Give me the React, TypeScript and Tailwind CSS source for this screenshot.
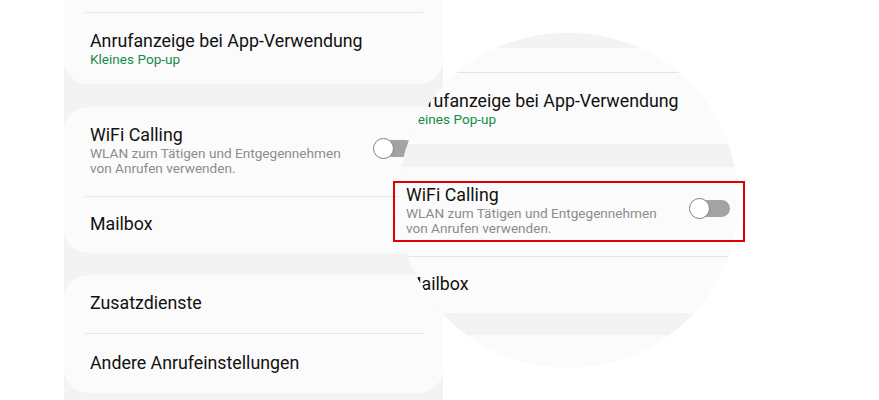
import React from "react";

function Divider() {
  return <div className="ml-[21px] mr-[20px] h-px bg-[#e5e5e5]" />;
}

function Toggle() {
  return (
    <div className="relative w-[41px] h-[21px] shrink-0 -mt-[4px]">
      <div className="absolute left-[10px] right-0 top-[2px] bottom-[2px] rounded-full bg-[#a3a3a3]" />
      <div className="absolute left-0 top-0 w-[21px] h-[21px] rounded-full bg-white border-[1.5px] border-[#808080]" />
    </div>
  );
}

function Row({ label, hidden }: { label: string; hidden?: boolean }) {
  return (
    <div className="h-[58.5px] px-[26px] flex items-center text-[17.8px] text-[#111]">
      {!hidden && label}
    </div>
  );
}

// the call settings list, used twice: once in place, once inside the magnifier
function Screen({ zoomed }: { zoomed?: boolean }) {
  return (
    <div className="w-[379px] bg-[#f3f3f3] flex flex-col gap-[23px] pb-[20px] [font-family:Roboto,'Noto_Sans',sans-serif]">
      <div className="bg-[#fbfbfb] rounded-b-[24px]">
        <div className="h-[24px]" />
        <Divider />
        <div className="px-[26px] pt-[17px] pb-[16px]">
          <div className="text-[17.8px] leading-[22px] text-[#111]">Anrufanzeige bei App-Verwendung</div>
          <div className="text-[13.6px] leading-[15.5px] text-[#168b49]">Kleines Pop-up</div>
        </div>
      </div>

      <div className="bg-[#fbfbfb] rounded-[24px] -mb-[1px]">
        <div className="flex items-center justify-between pl-[26px] pr-[29px] pt-[17px] pb-[19px]">
          <div>
            <div className="text-[17.8px] leading-[22px] text-[#111]">WiFi Calling</div>
            <div className="text-[13.6px] leading-[15.5px] text-[#8c8c8c]">
              WLAN zum Tätigen und Entgegennehmen
              <br />
              von Anrufen verwenden.
            </div>
          </div>
          <Toggle />
        </div>
        <Divider />
        <div className="h-[56px] px-[26px] flex items-center text-[17.8px] text-[#111]">Mailbox</div>
      </div>

      <div className="bg-[#fbfbfb] rounded-[24px]">
        <Row label="Zusatzdienste" hidden={zoomed} />
        <Divider />
        <Row label="Andere Anrufeinstellungen" hidden={zoomed} />
      </div>
    </div>
  );
}

export default function App() {
  return (
    <div className="relative w-[879px] h-[400px] bg-white overflow-hidden">
      <div className="pl-[64px]">
        <div className="w-[379px] h-[400px] overflow-hidden">
          <div className="-mt-[12px]">
            <Screen />
          </div>
        </div>
      </div>

      {/* magnifier */}
      <div className="absolute left-[398px] top-[33px] w-[340px] h-[334px] rounded-full overflow-hidden bg-[#f3f3f3]">
        <div className="absolute left-[-18px] top-[15px]">
          <Screen zoomed />
        </div>
      </div>

      <div className="absolute left-[393px] top-[181px] w-[352px] h-[61px] border-2 border-[#e00000]" />
    </div>
  );
}
